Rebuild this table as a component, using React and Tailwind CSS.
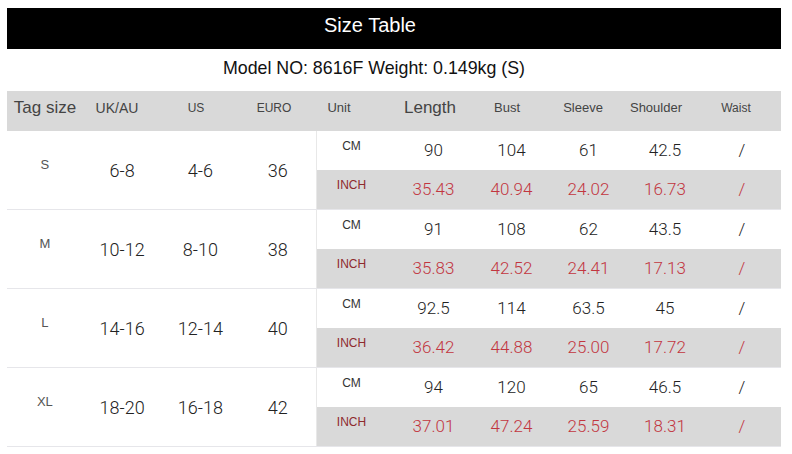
const sizes = [
  { tag: 'S', uk: '6-8', us: '4-6', euro: '36', cm: ['90', '104', '61', '42.5', '/'], inch: ['35.43', '40.94', '24.02', '16.73', '/'] },
  { tag: 'M', uk: '10-12', us: '8-10', euro: '38', cm: ['91', '108', '62', '43.5', '/'], inch: ['35.83', '42.52', '24.41', '17.13', '/'] },
  { tag: 'L', uk: '14-16', us: '12-14', euro: '40', cm: ['92.5', '114', '63.5', '45', '/'], inch: ['36.42', '44.88', '25.00', '17.72', '/'] },
  { tag: 'XL', uk: '18-20', us: '16-18', euro: '42', cm: ['94', '120', '65', '46.5', '/'], inch: ['37.01', '47.24', '25.59', '18.31', '/'] },
];

// right-side measurement columns
const cols = ['w-[79px]', 'w-[77px]', 'w-[77px]', 'w-[76px]', 'w-[78px]'];

function HeaderCell({ w, size, pad, children }) {
  return (
    <div className={`${w} flex items-center justify-center pb-[6px] ${pad} ${size} text-[#444]`}>
      {children}
    </div>
  );
}

function MeasureRow({ label, values, inch }) {
  return (
    <div className={`flex h-[39px] ${inch ? 'bg-[#d9d9d9]' : 'bg-white'}`}>
      <div className={`w-[77px] flex items-center justify-center pb-[10px] pr-[8px] text-[12px] ${inch ? 'text-[#8e2a2d]' : 'text-[#333]'}`}>
        {label}
      </div>
      {values.map((v, i) => (
        <div
          key={i}
          className={`${cols[i]} flex items-center justify-center font-light text-[17px] ${inch ? 'text-[#c2363f]' : 'text-[#222]'}`}
          style={{ fontFamily: 'Roboto, "Liberation Sans", sans-serif' }}
        >
          {v}
        </div>
      ))}
    </div>
  );
}

export default function App() {
  return (
    <div className="w-[792px] h-[454px] bg-white pt-[8px] pl-[7px] pr-[11px] font-['Liberation_Sans',Arial,sans-serif]">
      <div className="h-[41px] bg-black flex items-center justify-center pr-[48px] pb-[8px] text-white text-[20px]">
        Size Table
      </div>
      <div className="h-[42px] flex items-center justify-center pr-[40px] pb-[4px] text-[17.8px] text-[#111]">
        Model NO: 8616F Weight: 0.149kg (S)
      </div>

      {/* header */}
      <div className="h-[40px] bg-[#d9d9d9] flex">
        <HeaderCell w="w-[76px]" size="text-[17px]" pad="">Tag size</HeaderCell>
        <HeaderCell w="w-[79px]" size="text-[14px]" pad="pr-[11px]">UK/AU</HeaderCell>
        <HeaderCell w="w-[78px]" size="text-[12px]" pad="pr-[10px]">US</HeaderCell>
        <HeaderCell w="w-[77px]" size="text-[12px]" pad="pr-[9px]">EURO</HeaderCell>
        <HeaderCell w="w-[77px]" size="text-[13px]" pad="pr-[33px]">Unit</HeaderCell>
        <HeaderCell w="w-[79px]" size="text-[17px]" pad="pr-[7px]">Length</HeaderCell>
        <HeaderCell w="w-[77px]" size="text-[13px]" pad="pr-[9px]">Bust</HeaderCell>
        <HeaderCell w="w-[77px]" size="text-[13px]" pad="pr-[11px]">Sleeve</HeaderCell>
        <HeaderCell w="w-[76px]" size="text-[13px]" pad="pr-[18px]">Shoulder</HeaderCell>
        <HeaderCell w="w-[78px]" size="text-[12px]" pad="pr-[12px]">Waist</HeaderCell>
      </div>

      {/* size groups */}
      {sizes.map((s) => (
        <div key={s.tag} className="flex h-[79px] border-b border-[#e6e6ea]">
          <div className="w-[76px] flex items-center justify-center pb-[10px] text-[13px] text-[#555]">{s.tag}</div>
          {[s.uk, s.us, s.euro].map((v, i) => (
            <div
              key={i}
              className={`${['w-[79px]', 'w-[78px]', 'w-[77px]'][i]} flex items-center justify-center font-light text-[18px] text-[#222]`}
              style={{ fontFamily: 'Roboto, "Liberation Sans", sans-serif' }}
            >
              {v}
            </div>
          ))}
          <div className="flex flex-col border-l border-[#e8e8e8]">
            <MeasureRow label="CM" values={s.cm} />
            <MeasureRow label="INCH" values={s.inch} inch />
          </div>
        </div>
      ))}
    </div>
  );
}
